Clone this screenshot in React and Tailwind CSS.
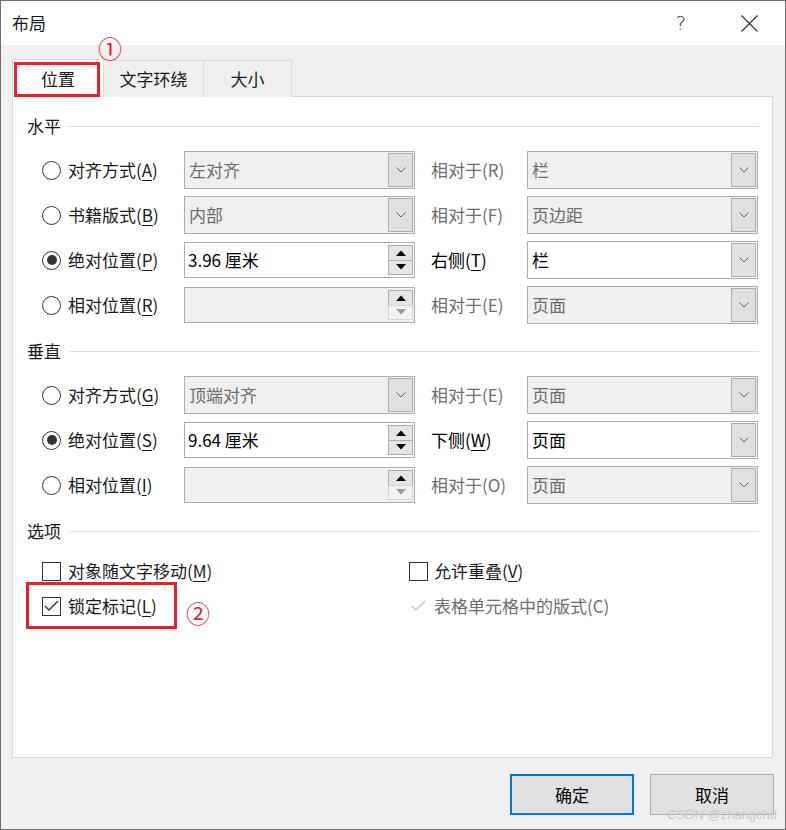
import React from 'react';

const Chevron = () => (
    <svg width="10" height="6" viewBox="0 0 10 6">
        <path d="M0.5 0.5 L5 5 L9.5 0.5" fill="none" stroke="#606060" strokeWidth="1" />
    </svg>
);

const Tri = ({ down, color }) => (
    <svg width="10" height="6" viewBox="0 0 10 6">
        {down ? <path d="M0 0 L10 0 L5 5.5 Z" fill={color} /> : <path d="M0 6 L10 6 L5 0.5 Z" fill={color} />}
    </svg>
);

const Acc = ({ text, k }) => (
    <span>
        {text}(<u className="underline-offset-[3px]">{k}</u>)
    </span>
);

function Combo({ value, disabled }) {
    return (
        <div
            className={`flex h-[38px] w-[231px] items-stretch border border-[#adadad] p-px ${disabled ? 'bg-[#f0f0f0] text-[#6d6d6d]' : 'bg-white text-black'
                }`}
        >
            <div className="flex flex-1 items-center pl-[3px]">{value}</div>
            <div className="flex w-[25px] items-center justify-center border border-[#adadad] bg-[#e1e1e1]">
                <Chevron />
            </div>
        </div>
    );
}

function Spin({ value, disabled }) {
    return (
        <div
            className={`flex h-[36px] w-[231px] items-stretch border border-[#adadad] py-[2px] pr-px ${disabled ? 'bg-[#f0f0f0]' : 'bg-white'
                }`}
        >
            <div className="flex flex-1 items-center pl-[3px] text-black">{value}</div>
            <div className="flex w-[25px] flex-col">
                <div className="flex flex-1 items-center justify-center border border-[#adadad] bg-[#e5e5e5]">
                    <Tri color="#000" />
                </div>
                <div
                    className={`-mt-px flex flex-1 items-center justify-center border ${disabled ? 'border-[#d5d5d5] bg-[#f3f3f3]' : 'border-[#adadad] bg-[#e5e5e5]'
                        }`}
                >
                    <Tri down color={disabled ? '#9a9a9a' : '#000'} />
                </div>
            </div>
        </div>
    );
}

const Radio = ({ checked }) => (
    <div className="flex h-[19px] w-[19px] items-center justify-center rounded-full border border-[#333]">
        {checked && <div className="h-[10px] w-[10px] rounded-full bg-[#333]" />}
    </div>
);

const Check = ({ checked, disabled }) => (
    <div
        className={`flex h-[19px] w-[19px] items-center justify-center border ${disabled ? 'border-transparent' : 'border-[#333]'
            }`}
    >
        {checked && (
            <svg width="15" height="12" viewBox="0 0 15 12">
                <path d="M1 6 L5 10 L14 1" fill="none" stroke={disabled ? '#c4c4c4' : '#333'} strokeWidth="1.4" />
            </svg>
        )}
    </div>
);

function Header({ title, className }) {
    return (
        <div className={`flex h-[24px] items-center pl-[14px] pr-[13px] ${className}`}>
            <span className="leading-[24px]">{title}</span>
            <div className="ml-[8px] h-px flex-1 bg-[#dcdcdc]" />
        </div>
    );
}

function Row({ checked, label, left, right, label2, label2Active }) {
    return (
        <div className="flex h-[38px] items-center pl-[29px]">
            <div className="flex w-[142px] items-center gap-[7px]">
                <Radio checked={checked} />
                {label}
            </div>
            {left}
            <div className={`ml-[16px] w-[96px] ${label2Active ? 'text-black' : 'text-[#6d6d6d]'}`}>{label2}</div>
            {right}
        </div>
    );
}

export default function App() {
    return (
        <div className="relative h-[830px] w-[786px] overflow-hidden border border-[#6e6e6e] bg-[#f0f0f0] font-['Noto_Sans_CJK_SC',sans-serif] text-[17px] leading-[24px] text-[#1a1a1a]">
            {/* title bar */}
            <div className="flex h-[44px] items-center bg-white pl-[11px]">
                <span className="text-[17px]">布局</span>
                <span className="ml-auto mr-[55px] font-['DejaVu_Sans',sans-serif] text-[20px] font-light text-[#333]">?</span>
                <svg className="mr-[27px]" width="17" height="17" viewBox="0 0 17 17">
                    <path d="M0.5 0.5 L16.5 16.5 M16.5 0.5 L0.5 16.5" stroke="#333" strokeWidth="1.2" />
                </svg>
            </div>

            {/* tabs */}
            <div className="mt-[14px] flex h-[38px] items-end pl-[11px]">
                <div className="relative z-10 flex h-[38px] w-[92px] items-center justify-center border border-b-0 border-[#d9d9d9] bg-white">
                    位置
                </div>
                <div className="-ml-px flex h-[37px] w-[101px] items-center justify-center border border-b-0 border-[#d9d9d9] bg-[#f0f0f0]">
                    文字环绕
                </div>
                <div className="-ml-px flex h-[37px] w-[89px] items-center justify-center border border-b-0 border-[#d9d9d9] bg-[#f0f0f0]">
                    大小
                </div>
            </div>

            {/* panel */}
            <div className="-mt-px ml-[11px] h-[662px] w-[761px] border border-[#d9d9d9] bg-white pt-[17px]">
                <Header title="水平" />
                <div className="mt-[13px] flex flex-col gap-[7px]">
                    <Row
                        label={<Acc text="对齐方式" k="A" />}
                        left={<Combo value="左对齐" disabled />}
                        label2="相对于(R)"
                        right={<Combo value="栏" disabled />}
                    />
                    <Row
                        label={<Acc text="书籍版式" k="B" />}
                        left={<Combo value="内部" disabled />}
                        label2="相对于(F)"
                        right={<Combo value="页边距" disabled />}
                    />
                    <Row
                        checked
                        label={<Acc text="绝对位置" k="P" />}
                        left={<Spin value="3.96 厘米" />}
                        label2={<Acc text="右侧" k="T" />}
                        label2Active
                        right={<Combo value="栏" />}
                    />
                    <Row
                        label={<Acc text="相对位置" k="R" />}
                        left={<Spin value="" disabled />}
                        label2="相对于(E)"
                        right={<Combo value="页面" disabled />}
                    />
                </div>

                <Header title="垂直" className="mt-[15px]" />
                <div className="mt-[13px] flex flex-col gap-[7px]">
                    <Row
                        label={<Acc text="对齐方式" k="G" />}
                        left={<Combo value="顶端对齐" disabled />}
                        label2="相对于(E)"
                        right={<Combo value="页面" disabled />}
                    />
                    <Row
                        checked
                        label={<Acc text="绝对位置" k="S" />}
                        left={<Spin value="9.64 厘米" />}
                        label2={<Acc text="下侧" k="W" />}
                        label2Active
                        right={<Combo value="页面" />}
                    />
                    <Row
                        label={<Acc text="相对位置" k="I" />}
                        left={<Spin value="" disabled />}
                        label2="相对于(O)"
                        right={<Combo value="页面" disabled />}
                    />
                </div>

                <Header title="选项" className="mt-[15px]" />
                <div className="mt-[14px] flex flex-col gap-[7px] pl-[29px]">
                    <div className="flex h-[28px] items-center">
                        <div className="flex w-[367px] items-center gap-[7px]">
                            <Check />
                            <Acc text="对象随文字移动" k="M" />
                        </div>
                        <div className="flex items-center gap-[6px]">
                            <Check />
                            <Acc text="允许重叠" k="V" />
                        </div>
                    </div>
                    <div className="flex h-[28px] items-center">
                        <div className="flex w-[367px] items-center gap-[7px]">
                            <Check checked />
                            <Acc text="锁定标记" k="L" />
                        </div>
                        <div className="flex items-center gap-[6px] text-[#6d6d6d]">
                            <Check checked disabled />
                            <span>表格单元格中的版式(C)</span>
                        </div>
                    </div>
                </div>
            </div>

            {/* buttons */}
            <div className="mt-[16px] flex justify-end gap-[16px] pr-[11px]">
                <button className="flex h-[41px] w-[124px] items-center justify-center border-2 border-[#0078d7] bg-[#e1e1e1] text-black">
                    确定
                </button>
                <button className="flex h-[41px] w-[124px] items-center justify-center border border-[#adadad] bg-[#e1e1e1] text-black">
                    取消
                </button>
            </div>

            {/* annotations */}
            <div className="absolute left-[13px] top-[61px] z-20 h-[35px] w-[86px] border-[3px] border-[#e8202a]" />
            <div className="absolute left-[97px] top-[33px] z-20 text-[24px] leading-[28px] text-[#e8202a]">①</div>
            <div className="absolute left-[185px] top-[598px] z-20 text-[24px] leading-[28px] text-[#e8202a]">②</div>
            <div className="absolute left-[25px] top-[581px] z-20 h-[47px] w-[151px] border-[3px] border-[#e8202a]" />

            {/* watermark */}
            <div className="absolute left-[666px] top-[806px] z-20 font-['Liberation_Sans',sans-serif] text-[13px] leading-[16px] text-[#c8c8c8]">
                CSDN @zhangchd
            </div>
        </div>
    );
}
